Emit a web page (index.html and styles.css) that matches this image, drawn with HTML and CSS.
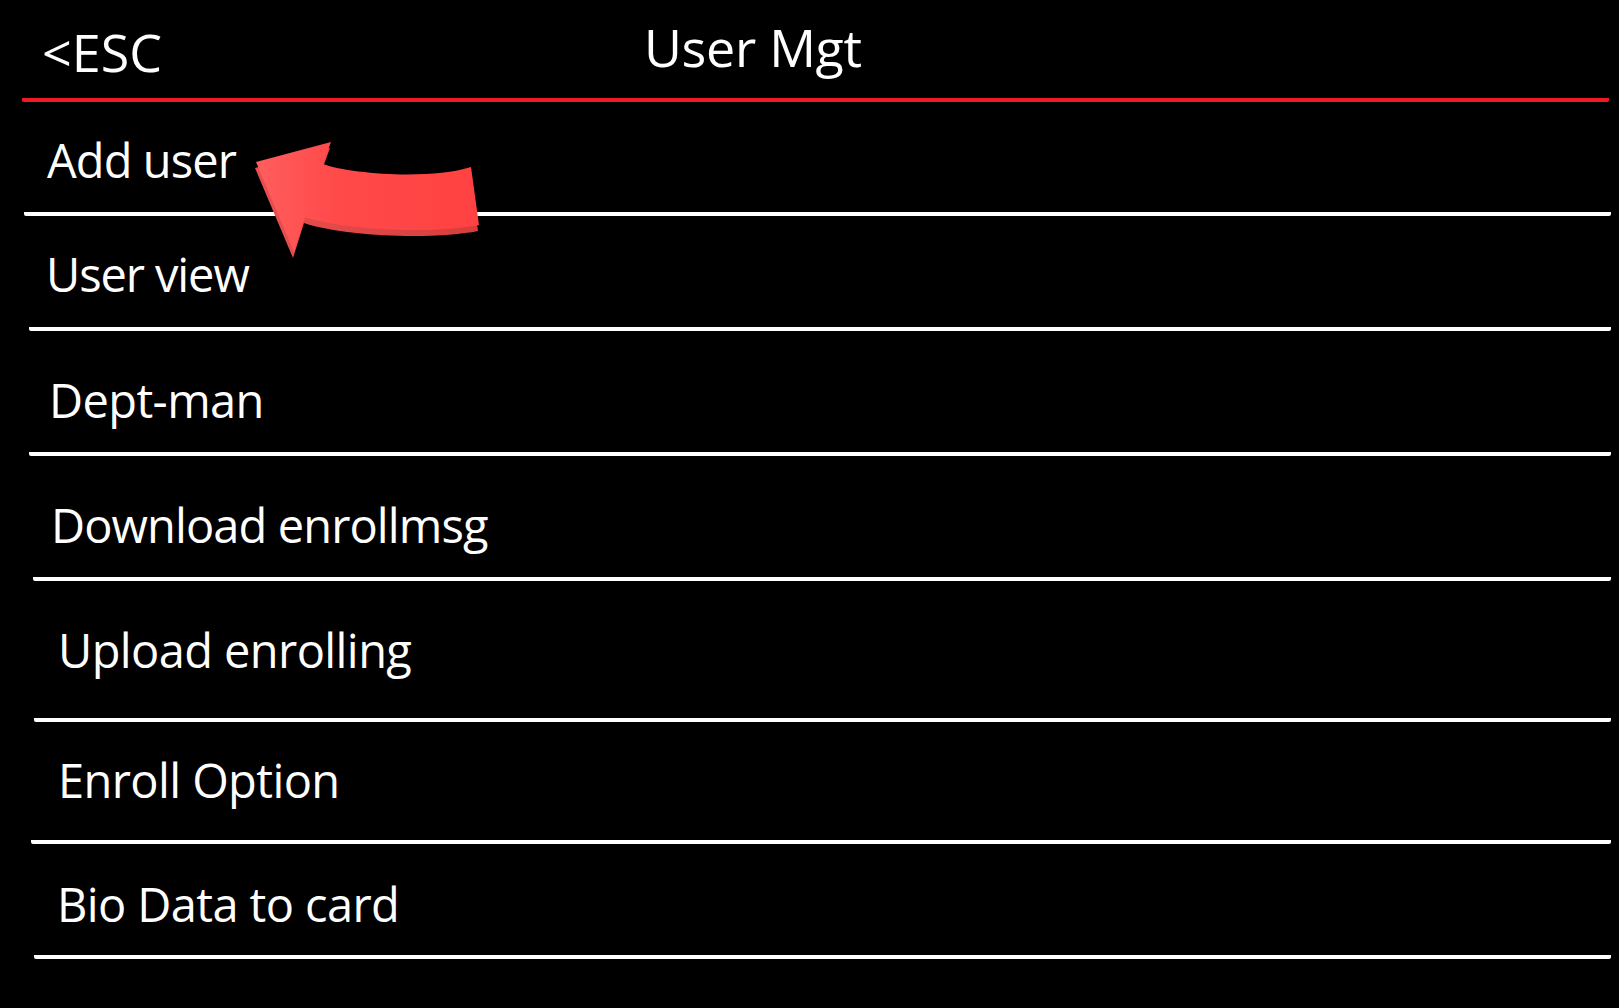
FILE: index.html
```
<!DOCTYPE html>
<html lang="en">
<head>
  <meta charset="UTF-8">
  <meta name="viewport" content="width=device-width, initial-scale=1.0">
  <title>User Mgt</title>
  <link rel="stylesheet" href="styles.css">
</head>
<body>
  <div class="screen">
<!--TOP BAR-->
    <header class="topbar">
      <span class="esc">&lt;ESC</span>
      <h1 class="title">User Mgt</h1>
    </header>

<!--MENU-->
    <ul class="menu">
      <li class="menu-item">Add user</li>
      <li class="menu-item">User view</li>
      <li class="menu-item">Dept-man</li>
      <li class="menu-item">Download enrollmsg</li>
      <li class="menu-item">Upload enrolling</li>
      <li class="menu-item">Enroll Option</li>
      <li class="menu-item">Bio Data to card</li>
    </ul>

<!--RED ARROW POINTING AT ADD USER-->
    <svg class="pointer" width="500" height="270" viewBox="0 0 500 270">
      <defs>
        <linearGradient id="arrowFace" x1="0" y1="0" x2="1" y2="0">
          <stop offset="0" stop-color="#ff5e5e"/>
          <stop offset="0.35" stop-color="#ff4a4a"/>
          <stop offset="1" stop-color="#ff4141"/>
        </linearGradient>
        <linearGradient id="arrowSide" x1="0" y1="0" x2="1" y2="0">
          <stop offset="0" stop-color="#e84f4f"/>
          <stop offset="1" stop-color="#d63d3d"/>
        </linearGradient>
      </defs>
      <path fill="url(#arrowSide)" transform="translate(-1 6)"
        d="M256,162 L331,142 L323,164 C350,174 430,180 471,167 L479,225 C440,233 350,232 305,217 L294,252 Z"/>
      <path fill="url(#arrowFace)"
        d="M256,162 L331,142 L323,164 C350,174 430,180 471,167 L479,225 C440,233 350,232 305,217 L294,252 Z"/>
    </svg>
  </div>
</body>
</html>
```

FILE: styles.css
```
body {
  background-color: #000;
  margin: 0;
  color: #fff;
  font-family: 'Open Sans', 'Noto Sans', sans-serif;
}
.screen {
  position: relative;
  width: 1619px;
  height: 1008px;
  overflow: hidden;
}
.topbar {
  box-sizing: border-box;
  display: flex;
  align-items: flex-start;
  height: 102px;
  margin: 0 10px 0 22px;
  padding-top: 17px;
  border-bottom: 4px solid #ed1c24;
  border-radius: 0 0 2px 2px;
}
.esc {
  box-sizing: border-box;
  width: 622px;
  padding-left: 20px;
  margin-top: 5px;
  font-size: 52px;
  line-height: 60px;
}
.title {
  margin: 0;
  font-size: 52px;
  font-weight: normal;
  line-height: 60px;
  letter-spacing: -0.3px;
}
.menu {
  list-style: none;
  margin: 0;
  padding: 0;
}
.menu-item {
  box-sizing: border-box;
  height: 115px;
  margin-right: 8px;
  padding-top: 30px;
  border-bottom: 4px solid #fff;
  border-radius: 0 0 2px 2px;
  font-size: 47px;
  line-height: 56px;
  letter-spacing: -0.6px;
  white-space: nowrap;
}
.menu-item:nth-child(1) {
  height: 114px;
  margin-left: 24px;
  padding-left: 23px;
  letter-spacing: -0.9px;
}
.menu-item:nth-child(2) {
  margin-left: 29px;
  padding-left: 17px;
  letter-spacing: -1.1px;
}
.menu-item:nth-child(3) {
  height: 125px;
  padding-top: 41px;
  margin-left: 29px;
  padding-left: 20px;
}
.menu-item:nth-child(4) {
  height: 125px;
  padding-top: 41px;
  margin-left: 33px;
  padding-left: 18px;
  letter-spacing: -0.9px;
}
.menu-item:nth-child(5) {
  height: 141px;
  padding-top: 41px;
  margin-left: 34px;
  padding-left: 24px;
}
.menu-item:nth-child(6) {
  height: 122px;
  margin-left: 31px;
  padding-left: 27px;
}
.menu-item:nth-child(7) {
  padding-top: 32px;
  margin-left: 34px;
  padding-left: 23px;
}
.pointer {
  position: absolute;
  left: 0;
  top: 0;
}
```
